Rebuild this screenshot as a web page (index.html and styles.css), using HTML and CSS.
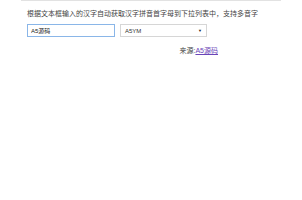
FILE: index.html
```html
<!DOCTYPE html>
<html lang="zh-CN">
<head>
    <meta charset="UTF-8">
    <title>汉字拼音首字母</title>
    <link rel="stylesheet" href="styles.css">
</head>
<body>
    <div class="wrap">
        <!-- Intro text -->
        <p class="intro">根据文本框输入的汉字自动获取汉字拼音首字母到下拉列表中，支持多音字</p>

        <!-- Input + select -->
        <div class="form-row">
            <input type="text" class="txt" value="A5源码">
            <div class="sel">
                <span>A5YM</span>
                <span class="arrow">&#9660;</span>
            </div>
        </div>

        <div class="source">来源:<a href="#">A5源码</a></div>
    </div>
</body>
</html>
```

FILE: styles.css
```css
* {
    margin: 0;
    padding: 0;
    box-sizing: border-box;
}
body {
    font-family: "Liberation Sans", "Noto Sans CJK SC", sans-serif;
    background: #fff;
    color: #333;
}
.wrap {
    width: 260px;
    margin: 0 auto;
    border-top: 1px solid #e2e2e2;
    padding: 0 6px;
}
/* Intro */
.intro {
    font-size: 7px;
    line-height: 9px;
    margin-top: 8px;
    color: #444;
}
/* Form row */
.form-row {
    display: flex;
    gap: 5px;
    margin-top: 6px;
}
.txt {
    width: 88px;
    height: 13px;
    border: 1px solid #8ab6e8;
    font-family: inherit;
    font-size: 6px;
    padding: 0 3px;
    color: #222;
    outline: none;
}
.sel {
    width: 87px;
    height: 13px;
    border: 1px solid #d6d6d6;
    font-size: 6px;
    padding: 0 4px;
    display: flex;
    justify-content: space-between;
    align-items: center;
    color: #333;
}
.sel .arrow {
    font-size: 4px;
    color: #222;
}
/* Source */
.source {
    width: 191px;
    text-align: right;
    font-size: 7px;
    margin-top: 8px;
    color: #444;
}
.source a {
    color: #6a45b8;
}
```
